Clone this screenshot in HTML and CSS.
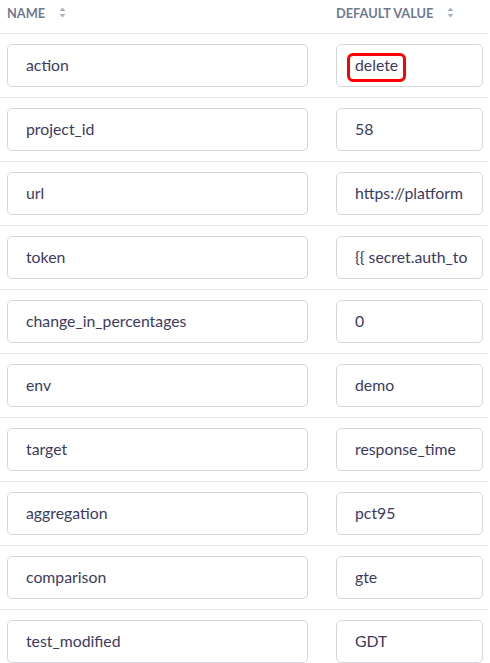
FILE: index.html
```html
<!DOCTYPE html>
<html>
<head>
<meta charset="utf-8">
<link rel="stylesheet" href="styles.css">
</head>
<body>
<div class="table">
  <div class="row head">
    <div class="cell name"><span class="th">NAME</span><svg class="sort" width="7" height="11" viewBox="0 0 7 11"><path d="M3.5 0.5 L6.5 4 L0.5 4 Z M3.5 10.5 L6.5 7 L0.5 7 Z" fill="#a9b1bf"/></svg></div>
    <div class="cell val"><span class="th">DEFAULT VALUE</span><svg class="sort" width="7" height="11" viewBox="0 0 7 11"><path d="M3.5 0.5 L6.5 4 L0.5 4 Z M3.5 10.5 L6.5 7 L0.5 7 Z" fill="#a9b1bf"/></svg></div>
  </div>
  <div class="row"><div class="cell name"><div class="field"><span class="txt">action</span></div></div><div class="cell val"><div class="field"><span class="txt">delete</span><span class="mark"></span></div></div></div>
  <div class="row"><div class="cell name"><div class="field"><span class="txt">project_id</span></div></div><div class="cell val"><div class="field"><span class="txt">58</span></div></div></div>
  <div class="row"><div class="cell name"><div class="field"><span class="txt">url</span></div></div><div class="cell val"><div class="field"><span class="txt">https://platform</span></div></div></div>
  <div class="row"><div class="cell name"><div class="field"><span class="txt">token</span></div></div><div class="cell val"><div class="field"><span class="txt">{{ secret.auth_to</span></div></div></div>
  <div class="row"><div class="cell name"><div class="field"><span class="txt">change_in_percentages</span></div></div><div class="cell val"><div class="field"><span class="txt">0</span></div></div></div>
  <div class="row"><div class="cell name"><div class="field"><span class="txt">env</span></div></div><div class="cell val"><div class="field"><span class="txt">demo</span></div></div></div>
  <div class="row"><div class="cell name"><div class="field"><span class="txt">target</span></div></div><div class="cell val"><div class="field"><span class="txt">response_time</span></div></div></div>
  <div class="row"><div class="cell name"><div class="field"><span class="txt">aggregation</span></div></div><div class="cell val"><div class="field"><span class="txt">pct95</span></div></div></div>
  <div class="row"><div class="cell name"><div class="field"><span class="txt">comparison</span></div></div><div class="cell val"><div class="field"><span class="txt">gte</span></div></div></div>
  <div class="row"><div class="cell name"><div class="field"><span class="txt">test_modified</span></div></div><div class="cell val"><div class="field"><span class="txt">GDT</span></div></div></div>
</div>
</body>
</html>
```
FILE: styles.css
```css
html, body {
  margin: 0;
  padding: 0;
  background: #ffffff;
}
body {
  font-family: Lato, "Open Sans", sans-serif;
  color: #3b3b60;
  overflow: hidden;
}
.table {
  width: 488px;
}
.row {
  display: grid;
  grid-template-columns: 329px 159px;
  border-bottom: 1px solid #e6e8ec;
}
.row.head {
  height: 33px;
  align-items: center;
}
.cell {
  padding: 10px 0 10px 7px;
  box-sizing: border-box;
}
.head .cell {
  padding-top: 0;
  padding-bottom: 0;
  display: flex;
  align-items: center;
  height: 33px;
  margin-top: -8px;
}
.cell.name {
  padding-right: 21px;
}
.cell.val {
  padding-right: 5px;
}
.th {
  font-size: 12.8px;
  font-weight: 700;
  color: #6f7a8f;
}
.sort {
  margin-left: 14px;
}
.field {
  position: relative;
  height: 43px;
  box-sizing: border-box;
  border: 1px solid #d3d7dd;
  border-radius: 5px;
  padding: 0 6px 2px 18px;
  display: flex;
  align-items: center;
  font-size: 15.8px;
  white-space: nowrap;
}
.txt {
  overflow: hidden;
  min-width: 0;
}
.mark {
  position: absolute;
  left: 10px;
  top: 8px;
  width: 59px;
  height: 29px;
  box-sizing: border-box;
  border: 3px solid #ff0000;
  border-radius: 6px;
}
```
